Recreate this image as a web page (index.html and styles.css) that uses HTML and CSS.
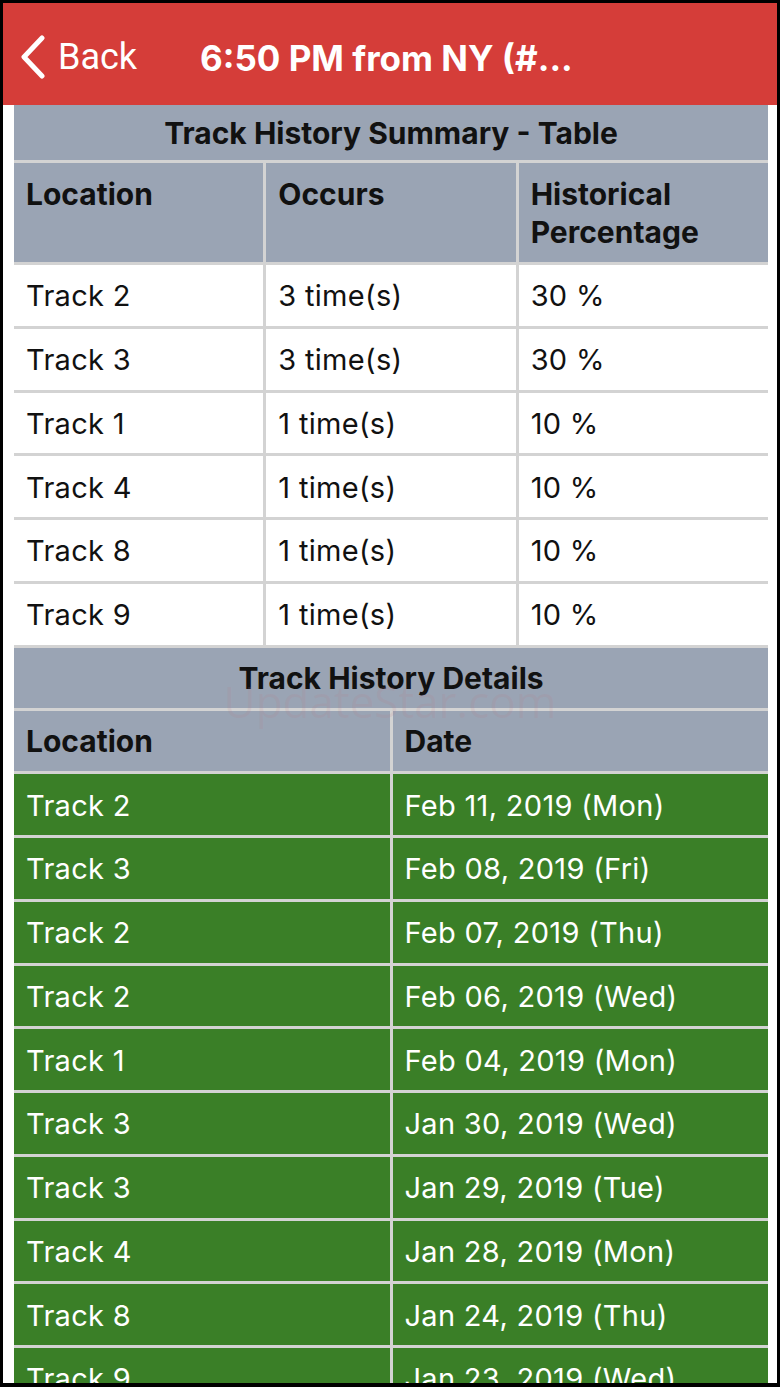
FILE: index.html
```html
<!DOCTYPE html>
<html>
<head>
<meta charset="utf-8">
<link rel="stylesheet" href="styles.css">
</head>
<body>
<div class="screen">
  <header class="navbar">
    <div class="back">
      <svg class="chev" width="28" height="44" viewBox="0 0 28 44"><path d="M24 3 L6 22 L24 41" fill="none" stroke="#fff" stroke-width="5" stroke-linecap="round" stroke-linejoin="round"/></svg>
      <span>Back</span>
    </div>
    <div class="title">6:50 PM from NY (#...</div>
  </header>
  <main class="content">
    <div class="table summary">
      <div class="cell caption">Track History Summary - Table</div>
      <div class="cell head tall">Location</div>
      <div class="cell head tall">Occurs</div>
      <div class="cell head tall">Historical Percentage</div>
      <div class="cell plain">Track 2</div><div class="cell plain">3 time(s)</div><div class="cell plain">30 %</div>
      <div class="cell plain">Track 3</div><div class="cell plain">3 time(s)</div><div class="cell plain">30 %</div>
      <div class="cell plain">Track 1</div><div class="cell plain">1 time(s)</div><div class="cell plain">10 %</div>
      <div class="cell plain">Track 4</div><div class="cell plain">1 time(s)</div><div class="cell plain">10 %</div>
      <div class="cell plain">Track 8</div><div class="cell plain">1 time(s)</div><div class="cell plain">10 %</div>
      <div class="cell plain">Track 9</div><div class="cell plain">1 time(s)</div><div class="cell plain">10 %</div>
    </div>
    <div class="table details">
      <div class="cell caption">Track History Details</div>
      <div class="cell head">Location</div>
      <div class="cell head">Date</div>
      <div class="cell green">Track 2</div><div class="cell green">Feb 11, 2019 (Mon)</div>
      <div class="cell green">Track 3</div><div class="cell green">Feb 08, 2019 (Fri)</div>
      <div class="cell green">Track 2</div><div class="cell green">Feb 07, 2019 (Thu)</div>
      <div class="cell green">Track 2</div><div class="cell green">Feb 06, 2019 (Wed)</div>
      <div class="cell green">Track 1</div><div class="cell green">Feb 04, 2019 (Mon)</div>
      <div class="cell green">Track 3</div><div class="cell green">Jan 30, 2019 (Wed)</div>
      <div class="cell green">Track 3</div><div class="cell green">Jan 29, 2019 (Tue)</div>
      <div class="cell green">Track 4</div><div class="cell green">Jan 28, 2019 (Mon)</div>
      <div class="cell green">Track 8</div><div class="cell green">Jan 24, 2019 (Thu)</div>
      <div class="cell green">Track 9</div><div class="cell green">Jan 23, 2019 (Wed)</div>
    </div>
    <div class="watermark">UpdateStar.com</div>
  </main>
</div>
</body>
</html>
```
FILE: styles.css
```css
html, body {
  margin: 0;
  padding: 0;
  background: #000;
  height: 1387px;
  overflow: hidden;
}
.screen {
  margin: 3px 3px 0 3px;
  width: 774px;
  height: 1380px;
  overflow: hidden;
  background: #fff;
  font-family: Inter, Roboto, "Liberation Sans", sans-serif;
}
.navbar {
  height: 102px;
  background: #d53d39;
  color: #fff;
  display: flex;
  align-items: center;
  box-sizing: border-box;
  padding-top: 6px;
}
.back {
  display: flex;
  align-items: center;
  width: 197px;
  padding-left: 15px;
  box-sizing: border-box;
  font-size: 36px;
  font-family: Roboto, "Liberation Sans", sans-serif;
}
.chev {
  margin-right: 12px;
}
.title {
  font-size: 35px;
  font-weight: 700;
  padding-top: 2px;
}
.content {
  position: relative;
  padding: 0 9px 0 11px;
}
.table {
  display: grid;
  gap: 3px;
  background: #d3d3d3;
  padding-bottom: 3px;
}
.summary {
  grid-template-columns: 1fr 1fr 1fr;
}
.details {
  grid-template-columns: 1fr 1fr;
}
.cell {
  box-sizing: border-box;
  height: 60.75px;
  padding-left: 12px;
  padding-top: 1px;
  display: flex;
  align-items: center;
  font-size: 29px;
  letter-spacing: 0.3px;
  color: #111;
}
.caption {
  grid-column: 1 / -1;
  justify-content: center;
  padding-left: 0;
  background: #9aa4b4;
  font-weight: 700;
  font-size: 30px;
  letter-spacing: 0;
  height: 55px;
}
.details .caption {
  height: 60px;
}
.head {
  background: #9aa4b4;
  font-weight: 700;
  font-size: 30px;
  letter-spacing: 0;
}
.head.tall {
  height: 99px;
  align-items: flex-start;
  padding-top: 12px;
  line-height: 38px;
  padding-right: 20px;
}
.plain {
  background: #fff;
}
.green {
  background: #3a7f27;
  color: #fff;
}
.watermark {
  position: absolute;
  left: 0;
  right: 0;
  top: 566px;
  text-align: center;
  font-size: 44px;
  font-family: "Open Sans", sans-serif;
  color: rgba(190, 120, 130, 0.12);
  pointer-events: none;
}
```
